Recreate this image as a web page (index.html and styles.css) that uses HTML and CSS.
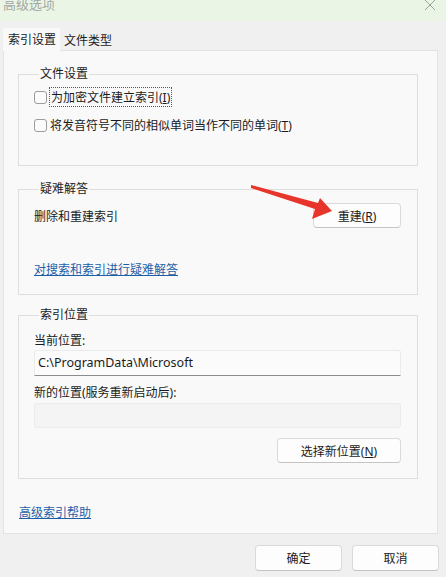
FILE: index.html
```html
<!DOCTYPE html>
<html lang="zh-CN">
<head>
    <meta charset="UTF-8">
    <meta name="viewport" content="width=device-width, initial-scale=1.0">
    <title>高级选项</title>
    <link rel="stylesheet" href="styles.css">
</head>
<body>

    <!-- Title bar -->
    <div class="titlebar">
        <span class="title">高级选项</span>
        <svg class="close" width="12" height="12" viewBox="0 0 12 12">
            <path d="M1 1 L11 11 M11 1 L1 11" stroke="#9aa59a" stroke-width="1" fill="none"/>
        </svg>
    </div>

    <!-- Tabs -->
    <div class="tabs">
        <span class="tab active">索引设置</span>
        <span class="tab">文件类型</span>
    </div>

    <div class="panel">
        <fieldset class="group group-files">
            <legend>文件设置</legend>
            <label class="check-row">
                <span class="checkbox"></span>
                <span class="focus">为加密文件建立索引(<u>I</u>)</span>
            </label>
            <label class="check-row second">
                <span class="checkbox"></span>
                <span>将发音符号不同的相似单词当作不同的单词(<u>T</u>)</span>
            </label>
        </fieldset>

        <fieldset class="group group-trouble">
            <legend>疑难解答</legend>
            <div class="rebuild-row">
                <span>删除和重建索引</span>
                <button class="btn btn-rebuild">重建(<u>R</u>)</button>
            </div>
            <a class="link trouble-link" href="#">对搜索和索引进行疑难解答</a>
        </fieldset>

        <fieldset class="group group-location">
            <legend>索引位置</legend>
            <div class="field-label">当前位置:</div>
            <div class="field current">C:\ProgramData\Microsoft</div>
            <div class="field-label second">新的位置(服务重新启动后):</div>
            <div class="field empty"></div>
            <div class="btn-row">
                <button class="btn btn-select">选择新位置(<u>N</u>)</button>
            </div>
        </fieldset>

        <a class="link help-link" href="#">高级索引帮助</a>
    </div>

    <div class="footer">
        <button class="btn btn-footer">确定</button>
        <button class="btn btn-footer">取消</button>
    </div>

    <!-- Red annotation arrow -->
    <svg class="arrow" width="446" height="577" viewBox="0 0 446 577">
        <polygon points="251,185 318,203 320,198 332,211 312,219 315,209 251,188" fill="#e8352b"/>
    </svg>

</body>
</html>
```

FILE: styles.css
```css
body {
    margin: 0;
    width: 446px;
    height: 577px;
    overflow: hidden;
    background: #f0f0f0;
    font-family: "Noto Sans", "Noto Sans CJK SC", sans-serif;
    font-size: 12px;
    color: #1b1b1b;
    position: relative;
}

.titlebar {
    height: 21px;
    background: #eaf5e6;
    display: flex;
    justify-content: space-between;
    overflow: hidden;
}

.title {
    font-size: 13px;
    color: #a3a8a3;
    margin: -5px 0 0 3px;
    line-height: 18px;
}

.close {
    margin: -1px 10px 0 0;
}

/* Tabs */
.tabs {
    display: flex;
    margin: 6px 0 0 3px;
    height: 23px;
    align-items: flex-end;
}

.tab {
    line-height: 18px;
    padding: 0 4px;
    font-size: 12px;
}

.tab.active {
    background: #f9f9f9;
    line-height: 23px;
    padding: 0 4px 0 5px;
    margin-bottom: -1px;
    position: relative;
}

.panel {
    margin: 0 8px 0 3px;
    height: 484px;
    box-sizing: border-box;
    background: #f9f9f9;
    border: 1px solid #e3e3e3;
    padding: 15px 19px 0 14px;
}

/* Group boxes */
.group {
    margin: 0;
    border: 1px solid #dedede;
    padding: 0 16px 0 15px;
    min-width: 0;
}

legend {
    line-height: 16px;
    padding: 0 1px;
    margin-left: 5px;
}

.group-files {
    padding-top: 5px;
    padding-bottom: 30px;
}

.group-trouble {
    margin-top: 15px;
    padding-bottom: 16px;
}

.group-location {
    margin-top: 12px;
    padding-top: 10px;
    padding-bottom: 15px;
}

.check-row {
    display: flex;
    align-items: center;
    height: 20px;
}

.check-row.second {
    margin-top: 8px;
}

.checkbox {
    width: 11px;
    height: 11px;
    border: 1px solid #9c9c9c;
    border-radius: 3px;
    background: #fbfbfb;
    margin-right: 3px;
}

.focus {
    outline: 1px dotted #555;
    outline-offset: 0;
    padding: 0 1px;
}

.rebuild-row {
    display: flex;
    justify-content: space-between;
    align-items: center;
    margin-top: 6px;
}

.btn {
    font-family: "Noto Sans", "Noto Sans CJK SC", sans-serif;
    font-size: 12px;
    color: #1b1b1b;
    background: #fdfdfd;
    border: 1px solid #dadada;
    border-bottom-color: #c4c4c4;
    border-radius: 4px;
    height: 25px;
    padding: 0;
}

.btn-rebuild {
    width: 88px;
}

.link {
    display: inline-block;
    color: #1c5fa8;
    text-decoration: underline;
    line-height: 16px;
}

.trouble-link {
    margin-top: 34px;
}

.field-label {
    line-height: 16px;
}

.field-label.second {
    margin-top: 9px;
}

.field {
    box-sizing: border-box;
    border: 1px solid #ebebeb;
    border-radius: 3px;
}

.field.current {
    margin-top: 1px;
    height: 26px;
    line-height: 24px;
    padding-left: 3px;
    font-size: 12.5px;
    background: #fbfbfb;
    border-bottom: 1px solid #8b8b8b;
    border-radius: 3px 3px 0 0;
}

.field.empty {
    margin-top: 2px;
    height: 25px;
    background: #f4f4f4;
}

.btn-row {
    display: flex;
    justify-content: flex-end;
    margin-top: 10px;
}

.btn-select {
    width: 124px;
}

.help-link {
    margin: 26px 0 0 1px;
}

.footer {
    display: flex;
    justify-content: flex-end;
    gap: 10px;
    margin: 11px 7px 0 0;
}

.btn-footer {
    width: 87px;
    height: 26px;
}

.arrow {
    position: absolute;
    left: 0;
    top: 0;
    pointer-events: none;
}
```
